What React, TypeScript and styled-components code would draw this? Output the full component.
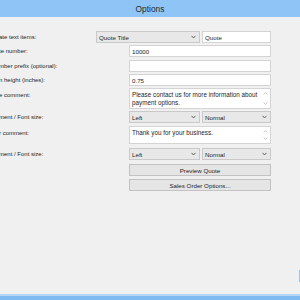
import React from "react";
import styled, { createGlobalStyle } from "styled-components";

const GlobalStyle = createGlobalStyle`
  html, body { margin: 0; padding: 0; background: #f0f0f0; }
  body { font-family: "Liberation Sans", Arial, sans-serif; }
  * { box-sizing: border-box; }
`;

const Window = styled.div`
  position: relative;
  width: 300px;
  height: 300px;
  display: flex;
  flex-direction: column;
  overflow: hidden;
  background: #f0f0f0;
`;

const TitleBar = styled.div`
  height: 17px;
  flex: none;
  background: #8ec5f6;
  color: #2b2b2b;
  font-size: 8.4px;
  display: flex;
  align-items: center;
  justify-content: center;
  padding-top: 1px;
`;

const Content = styled.div`
  flex: 1;
  display: flex;
  flex-direction: column;
  padding-top: 14px;
`;

const Row = styled.div<{ $gap: number }>`
  display: grid;
  grid-template-columns: 96px 175px;
  align-items: center;
  margin-top: ${(p) => p.$gap}px;
`;

const TopRow = styled(Row)`
  align-items: start;
`;

const Label = styled.div<{ $shift?: number }>`
  font-size: 6px;
  color: #1e1e1e;
  white-space: nowrap;
  overflow: hidden;
  margin-left: ${(p) => p.$shift ?? 0}px;
`;

const TopLabel = styled(Label)`
  padding-top: 4px;
`;

const Controls = styled.div<{ $indent: number }>`
  display: flex;
  gap: 2px;
  padding-left: ${(p) => p.$indent}px;
`;

const Select = styled.div<{ $w: number }>`
  width: ${(p) => p.$w}px;
  height: 12px;
  border: 1px solid #c9c9c9;
  background: #e8e8e8;
  display: flex;
  align-items: center;
  justify-content: space-between;
  padding: 0 3px 0 2px;
  font-size: 6.2px;
  color: #1e1e1e;
`;

const Chevron = () => (
  <svg width="5" height="4" viewBox="0 0 5 4">
    <path d="M0.5 0.8 L2.5 3 L4.5 0.8" fill="none" stroke="#555" strokeWidth="0.9" />
  </svg>
);

const Input = styled.div<{ $w: number }>`
  width: ${(p) => p.$w}px;
  height: 12px;
  border: 1px solid #d4d4d4;
  background: #ffffff;
  display: flex;
  align-items: center;
  padding: 0 2px;
  font-size: 6.2px;
  color: #1e1e1e;
`;

const TextArea = styled.div<{ $h: number }>`
  width: 142px;
  height: ${(p) => p.$h}px;
  border: 1px solid #d4d4d4;
  background: #ffffff;
  display: flex;
  justify-content: space-between;
  padding: 2px;
  font-size: 6.3px;
  line-height: 8px;
  color: #1e1e1e;
`;

const AreaText = styled.div`
  white-space: pre;
`;

const Scroll = styled.div`
  display: flex;
  flex-direction: column;
  justify-content: space-between;
  align-items: center;
  width: 6px;
  padding: 1px 0;
`;

const ArrowUp = () => (
  <svg width="5" height="3" viewBox="0 0 5 3">
    <path d="M0.6 2.5 L2.5 0.6 L4.4 2.5" fill="none" stroke="#b8b8b8" strokeWidth="0.8" />
  </svg>
);
const ArrowDown = () => (
  <svg width="5" height="3" viewBox="0 0 5 3">
    <path d="M0.6 0.5 L2.5 2.4 L4.4 0.5" fill="none" stroke="#b8b8b8" strokeWidth="0.8" />
  </svg>
);

const Button = styled.div`
  width: 142px;
  height: 12px;
  border: 1px solid #c2c2c2;
  background: #e5e5e5;
  display: flex;
  align-items: center;
  justify-content: center;
  font-size: 6.2px;
  color: #1e1e1e;
`;

const Footer = styled.div`
  height: 6px;
  flex: none;
  background: #7fbbf0;
  border-top: 2px solid #b3d6f6;
`;

const EdgeMark = styled.div`
  position: absolute;
  right: 0;
  top: 270px;
  width: 1px;
  height: 12px;
  background: #8ec5f6;
`;

export default function App() {
  return (
    <>
      <GlobalStyle />
      <Window>
        <TitleBar>Options</TitleBar>
        <Content>
          <Row $gap={0}>
            <Label $shift={-1}>ate text items:</Label>
            <Controls $indent={0}>
              <Select $w={104}>
                <span>Quote Title</span>
                <Chevron />
              </Select>
              <Input $w={69}>Quote</Input>
            </Controls>
          </Row>
          <Row $gap={2}>
            <Label $shift={-1}>te number:</Label>
            <Controls $indent={33}>
              <Input $w={142}>10000</Input>
            </Controls>
          </Row>
          <Row $gap={3}>
            <Label $shift={-1}>mber prefix (optional):</Label>
            <Controls $indent={33}>
              <Input $w={142} />
            </Controls>
          </Row>
          <Row $gap={2}>
            <Label $shift={-1}>n height (inches):</Label>
            <Controls $indent={33}>
              <Input $w={142}>0.75</Input>
            </Controls>
          </Row>
          <TopRow $gap={2}>
            <TopLabel $shift={-1}>e comment:</TopLabel>
            <Controls $indent={33}>
              <TextArea $h={21}>
                <AreaText>{"Please contact us for more information about\npayment options."}</AreaText>
                <Scroll>
                  <ArrowUp />
                  <ArrowDown />
                </Scroll>
              </TextArea>
            </Controls>
          </TopRow>
          <Row $gap={2}>
            <Label $shift={-1}>ment / Font size:</Label>
            <Controls $indent={33}>
              <Select $w={71}>
                <span>Left</span>
                <Chevron />
              </Select>
              <Select $w={69}>
                <span>Normal</span>
                <Chevron />
              </Select>
            </Controls>
          </Row>
          <TopRow $gap={3}>
            <TopLabel $shift={-1}>r comment:</TopLabel>
            <Controls $indent={33}>
              <TextArea $h={18}>
                <AreaText>Thank you for your business.</AreaText>
                <Scroll>
                  <ArrowUp />
                  <ArrowDown />
                </Scroll>
              </TextArea>
            </Controls>
          </TopRow>
          <Row $gap={4}>
            <Label $shift={-1}>ment / Font size:</Label>
            <Controls $indent={33}>
              <Select $w={71}>
                <span>Left</span>
                <Chevron />
              </Select>
              <Select $w={69}>
                <span>Normal</span>
                <Chevron />
              </Select>
            </Controls>
          </Row>
          <Row $gap={4}>
            <span />
            <Controls $indent={33}>
              <Button>Preview Quote</Button>
            </Controls>
          </Row>
          <Row $gap={3}>
            <span />
            <Controls $indent={33}>
              <Button>Sales Order Options...</Button>
            </Controls>
          </Row>
        </Content>
        <Footer />
        <EdgeMark />
      </Window>
    </>
  );
}
